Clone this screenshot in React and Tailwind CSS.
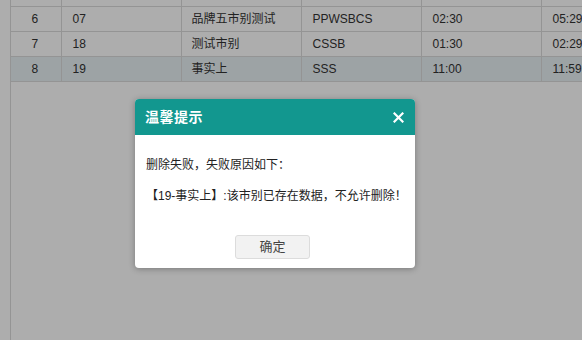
import React from "react";

const rows = [
  { no: 6, code: "07", name: "品牌五市别测试", abbr: "PPWSBCS", start: "02:30", end: "05:29" },
  { no: 7, code: "18", name: "测试市别", abbr: "CSSB", start: "01:30", end: "02:29" },
  { no: 8, code: "19", name: "事实上", abbr: "SSS", start: "11:00", end: "11:59", active: true },
];

const font = { fontFamily: '"Liberation Sans", Arial, "Noto Sans CJK SC", sans-serif' };

const App = () => {
  return (
    <div className="relative w-[582px] h-[340px] overflow-hidden bg-white text-[#333]" style={font}>
      <div className="ml-[10px] h-full border-l border-[#dadada] overflow-hidden">
        <table className="border-collapse text-[12px] table-fixed w-[700px] -mt-[19px]">
          <colgroup>
            <col className="w-[50px]" />
            <col className="w-[120px]" />
            <col className="w-[120px]" />
            <col className="w-[120px]" />
            <col className="w-[120px]" />
            <col className="w-[170px]" />
          </colgroup>
          <tbody>
            <tr className="h-[25px]">
              <td className="border border-[#dadada] border-l-0"></td>
              <td className="border border-[#dadada]"></td>
              <td className="border border-[#dadada]"></td>
              <td className="border border-[#dadada]"></td>
              <td className="border border-[#dadada]"></td>
              <td className="border border-[#dadada]"></td>
            </tr>
            {rows.map((r) => (
              <tr key={r.no} className={`h-[25px] ${r.active ? "bg-[#e8f1f4]" : ""}`}>
                <td className="border border-[#dadada] border-l-0 text-center pr-[2px]">{r.no}</td>
                <td className="border border-[#dadada] pl-[11px]">{r.code}</td>
                <td className="border border-[#dadada] pl-[10px]">{r.name}</td>
                <td className="border border-[#dadada] pl-[11px]">{r.abbr}</td>
                <td className="border border-[#dadada] pl-[11px]">{r.start}</td>
                <td className="border border-[#dadada] pl-[11px]">{r.end}</td>
              </tr>
            ))}
          </tbody>
        </table>
      </div>

      {/* mask */}
      <div className="absolute inset-0 bg-black/[0.32]"></div>

      {/* dialog */}
      <div className="absolute left-[135px] top-[99px] w-[280px] h-[169px] bg-white rounded-[4px] shadow-[0_1px_6px_rgba(0,0,0,0.3)] overflow-hidden flex flex-col">
        <div className="h-[36px] bg-[#12978f] flex items-center justify-between pl-[10px] pr-[11px]">
          <span className="text-white text-[14px] font-bold tracking-[0.5px]">温馨提示</span>
          <svg width="11" height="11" viewBox="0 0 11 11">
            <path d="M1.5 1.5 L9.5 9.5 M9.5 1.5 L1.5 9.5" stroke="#fff" strokeWidth="2.2" strokeLinecap="square" />
          </svg>
        </div>
        <div className="flex-1 pl-[11px] pt-[22px] text-[12px] text-[#222] whitespace-nowrap">
          <p className="leading-[16px]">删除失败，失败原因如下：</p>
          <p className="leading-[16px] mt-[15px]">【19-事实上】:该市别已存在数据，不允许删除！</p>
        </div>
        <div className="flex justify-center pr-[5px] pb-[9px]">
          <button className="w-[75px] h-[24px] bg-[#f2f2f2] border border-[#dcdcdc] rounded-[3px] text-[13px] text-[#444]">
            确定
          </button>
        </div>
      </div>
    </div>
  );
};

export default App;
